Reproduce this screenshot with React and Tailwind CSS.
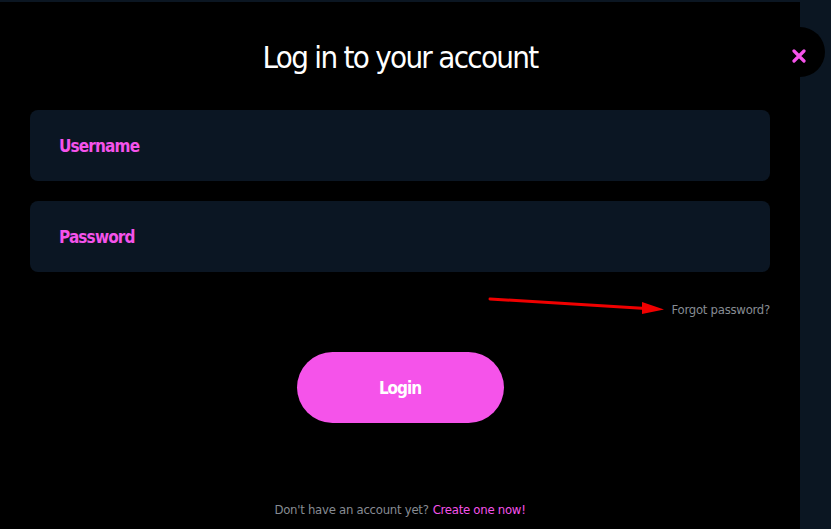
import React from "react";

const font = { fontFamily: '"DejaVu Sans Condensed", "Liberation Sans Narrow", Lato, sans-serif' };

export default function App() {
  return (
    <div
      className="relative w-[831px] h-[529px] overflow-hidden bg-[#0b1622] pt-[2px]"
      style={font}
    >
      <div className="w-[800px] h-[527px] bg-black flex flex-col px-[30px]">
        <h1 className="mt-[35px] text-center text-white text-[31px] leading-[40px] tracking-[-0.055em] font-normal">
          Log in to your account
        </h1>
        <div className="mt-[33px] h-[71px] rounded-lg bg-[#0b1623] flex items-center pl-[29px] pt-[2px]">
          <span className="text-[#f553ea] font-bold text-[17px] tracking-[-0.05em]">Username</span>
        </div>
        <div className="mt-[20px] h-[71px] rounded-lg bg-[#0b1623] flex items-center pl-[29px] pt-[2px]">
          <span className="text-[#f553ea] font-bold text-[17px] tracking-[-0.05em]">Password</span>
        </div>
        <div className="mt-[28px] h-[20px] flex justify-end items-center">
          <span className="text-[#878c93] text-[13px] tracking-[-0.02em]">Forgot password?</span>
        </div>
        <div className="mt-[32px] flex justify-center">
          <button className="w-[207px] h-[71px] rounded-full bg-[#f553ea] text-white font-bold text-[17px] tracking-[-0.06em] pt-[2px]">
            Login
          </button>
        </div>
        <div className="mt-[77px] h-[20px] flex justify-center items-center text-[13px] tracking-[-0.02em]">
          <span className="text-[#878c93]">Don't have an account yet?</span>
          <span className="text-[#f553ea] ml-[4px]">Create one now!</span>
        </div>
      </div>

      <div className="absolute left-[775px] top-[27px] w-[50px] h-[50px] rounded-full bg-black flex items-center justify-center">
        <svg width="14" height="14" viewBox="0 0 14 14" className="mt-[7px] -ml-[2px]">
          <path d="M2 2 L12 12 M12 2 L2 12" stroke="#f553ea" strokeWidth="3.2" strokeLinecap="round" />
        </svg>
      </div>

      <svg className="absolute left-[480px] top-[285px]" width="200" height="40" viewBox="0 0 200 40">
        <line x1="10" y1="14" x2="166" y2="23.5" stroke="#f00000" strokeWidth="3" strokeLinecap="round" />
        <polygon points="184,24.5 162,17 162,29" fill="#f00000" />
      </svg>
    </div>
  );
}
